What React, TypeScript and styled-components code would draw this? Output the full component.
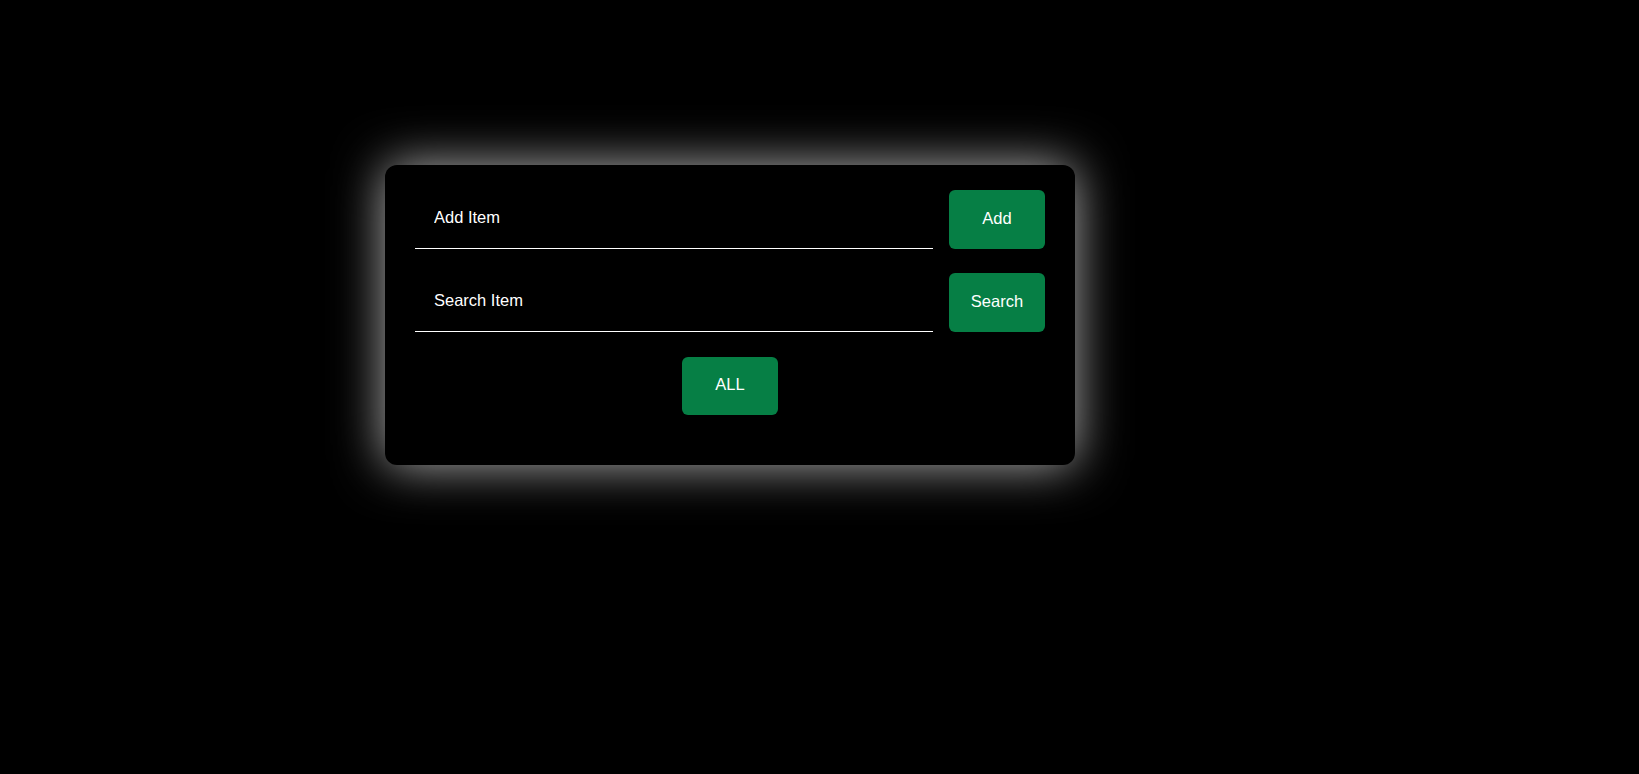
import React from "react";
import styled, { createGlobalStyle } from "styled-components";

const GlobalStyle = createGlobalStyle`
  html, body {
    margin: 0;
    padding: 0;
    background: #000;
    min-height: 100%;
  }
  body {
    font-family: "Liberation Sans", Arial, sans-serif;
    color: #fff;
  }
`;

const Page = styled.main`
  min-height: 774px;
  background: #000;
  padding: 165px 0 0 385px;
  box-sizing: border-box;
`;

const Card = styled.section`
  width: 690px;
  height: 300px;
  box-sizing: border-box;
  background: #000;
  border-radius: 12px;
  box-shadow: 0 0 50px rgba(255, 255, 255, 0.7);
  padding: 25px 30px 50px;
  display: flex;
  flex-direction: column;
  gap: 24.75px;
`;

const Row = styled.div`
  display: flex;
  align-items: stretch;
  gap: 16px;
  height: 58.5px;
`;

const Field = styled.input`
  flex: 1;
  min-width: 0;
  background: transparent;
  border: none;
  border-bottom: 1px solid #fff;
  color: #fff;
  font-family: "Liberation Sans", Arial, sans-serif;
  font-size: 16.5px;
  padding: 0 0 3px 19px;
  outline: none;
  &::placeholder {
    color: #fff;
    opacity: 1;
  }
`;

const Button = styled.button`
  width: 96px;
  height: 100%;
  flex: none;
  background: #067f45;
  color: #fff;
  border: none;
  border-radius: 6px;
  font-family: "Liberation Sans", Arial, sans-serif;
  font-size: 16.5px;
  padding: 0 0 2px;
  cursor: pointer;
`;

const Center = styled.div`
  display: flex;
  justify-content: center;
  height: 58.5px;
`;

export default function App() {
  return (
    <>
      <GlobalStyle />
      <Page>
        <Card>
          <Row>
            <Field placeholder="Add Item" />
            <Button>Add</Button>
          </Row>
          <Row>
            <Field placeholder="Search Item" />
            <Button>Search</Button>
          </Row>
          <Center>
            <Button>ALL</Button>
          </Center>
        </Card>
      </Page>
    </>
  );
}
